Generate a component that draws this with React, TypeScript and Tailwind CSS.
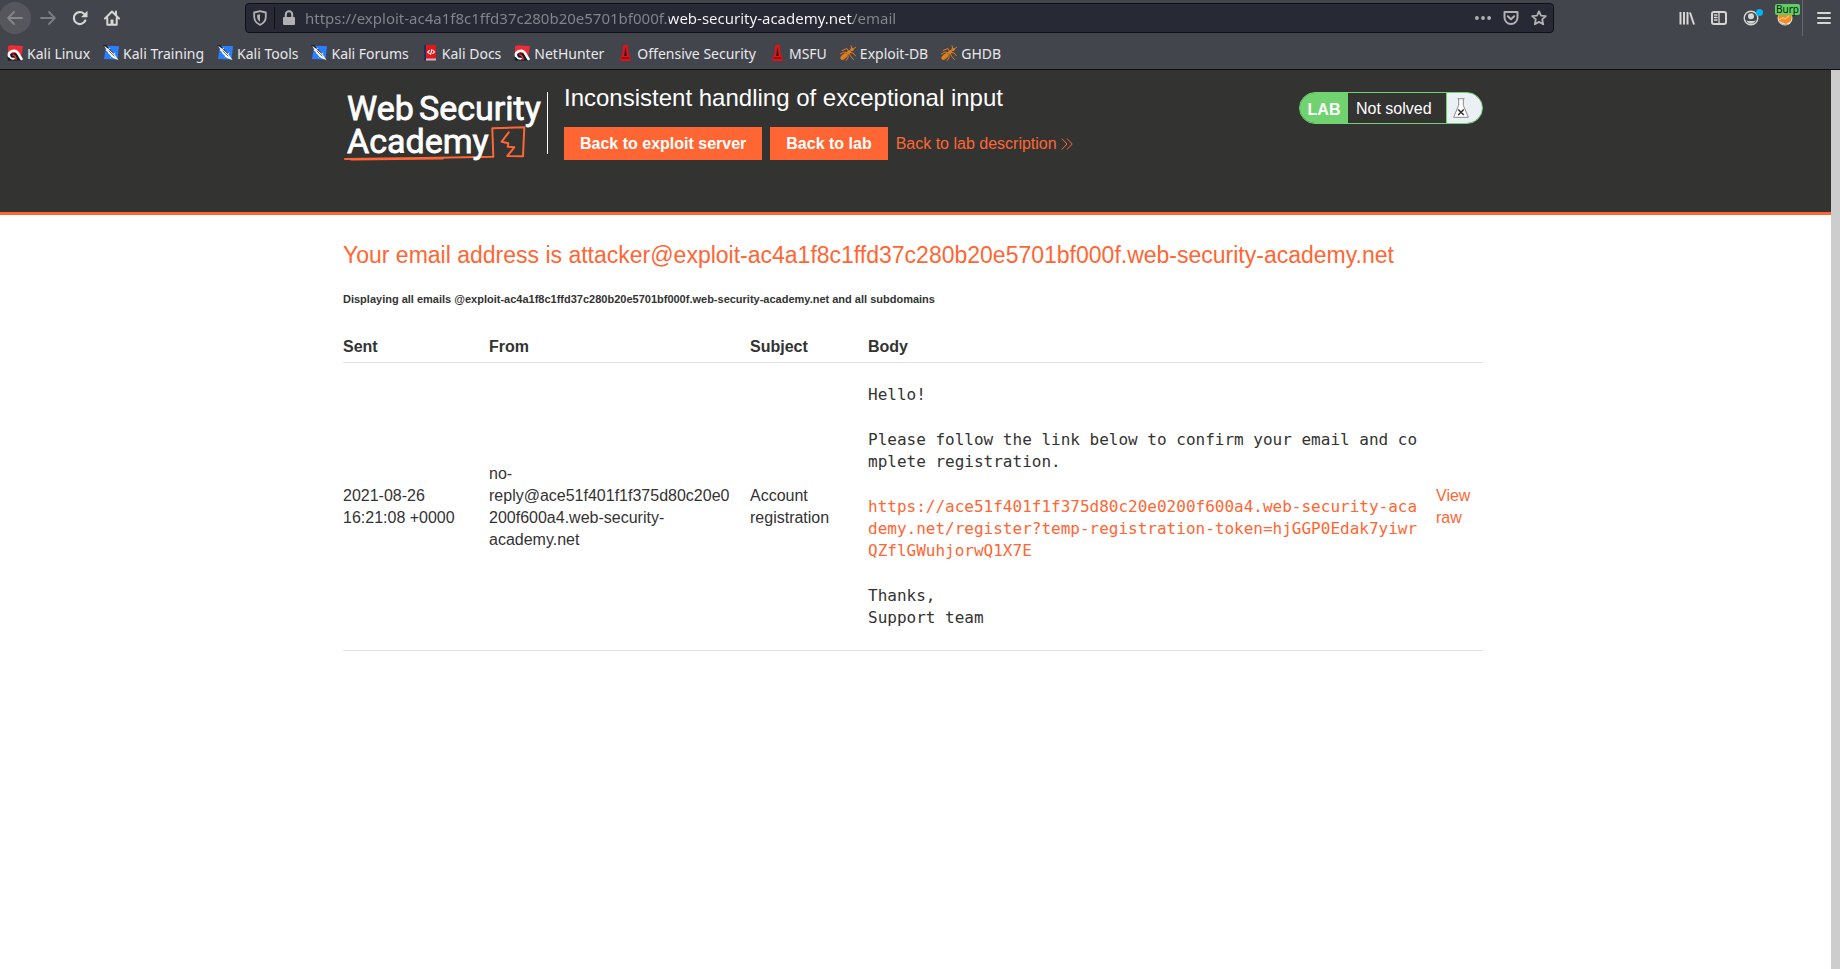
import React from "react";

type IconProps = { children: React.ReactNode; className?: string };

function Icon({ children, className = "" }: IconProps) {
  return (
    <svg
      viewBox="0 0 16 16"
      className={`h-4 w-4 shrink-0 ${className}`}
      fill="none"
      stroke="currentColor"
      strokeWidth="2"
      strokeLinecap="round"
      strokeLinejoin="round"
      aria-hidden="true"
    >
      {children}
    </svg>
  );
}

function DragonIcon() {
  return (
    <Icon>
      <path d="M1 1l3 -.7L16 1l-2 12H5L1 11z" fill="#ef2b36" stroke="none" />
      <path d="M0 9l1 6.500h13l1-2L9 8z" fill="#15181f" stroke="none" />
      <path d="M2 11C1 8 4 5.800 7 5.800c3.500 0 4.300 2.400 5.200 4.400.7 1.500 1.500 2.600 2.300 3.800" stroke="#fff" strokeWidth="2.600" />
      <path d="M6 10c2 .2 2.800 1.800 3 4.200" stroke="#ef2b36" strokeWidth="1.600" />
      <path d="M2.500 11.500c.8 1.800 2.500 2.500 4.500 2.200" stroke="#fff" strokeWidth="1.800" />
    </Icon>
  );
}

function KnifeIcon() {
  return (
    <Icon>
      <path d="M3 1h13l-1.500 13.500L1 14z" fill="#2a7fff" stroke="none" />
      <path d="M0 0h3l8 8.500L10 12z" fill="#15181f" stroke="none" />
      <path d="M1 .5l5 4 6 5.500 3.500 5L10 13 5.500 8.500z" fill="#fff" stroke="none" />
      <path d="M3.500 5.500l3-2M8 12l4-4" stroke="#fff" strokeWidth="1" />
      <path d="M6 6l5 5" stroke="#444" strokeWidth="0.800" />
    </Icon>
  );
}

function DocsIcon() {
  return (
    <Icon>
      <path d="M2 0h12v15.500H2z" fill="#e3161b" stroke="none" />
      <path d="M2 0h2v15.500H2z" fill="#1c2f63" stroke="none" />
      <path d="M4 13.500h10v2H4z" fill="#b9c0cc" stroke="none" />
      <path d="M7.500 5.500L5.500 7.200l1.800 1.500M9.800 4.500l-1.200 5M11 5.300l1.700 1.500-1.900 1.700" stroke="#fff" strokeWidth="1.100" />
    </Icon>
  );
}

function SpearIcon() {
  return (
    <Icon>
      <path d="M6 0h5l.5 8L14 14l-1 2H4l-1-2 2.500-6z" fill="#d8141c" stroke="none" />
      <path d="M8.500 2L9.600 11H7.400z" fill="#1b1011" stroke="none" />
      <path d="M5 13h7" stroke="#8c0d13" strokeWidth="1.500" />
    </Icon>
  );
}

function AntIcon() {
  return (
    <Icon className="text-[#dd7d1c]">
      <ellipse cx="4" cy="11.500" rx="4.200" ry="2.400" transform="rotate(-40 4 11.5)" fill="currentColor" stroke="none" />
      <ellipse cx="9" cy="7" rx="2.400" ry="1.600" transform="rotate(-35 9 7)" fill="currentColor" stroke="none" />
      <circle cx="12" cy="4.500" r="1.700" fill="currentColor" stroke="none" />
      <path d="M12 4L11 .7M12.500 4.500l3.300-2.300M9 7L7 3.500 2 5.500M8 8l-4-1-3.500 2M9.500 7.500l3.500.5 2.700 3M9 8l1.500 3 3 3.500M8 9v4l-2 2.500" strokeWidth="1" />
    </Icon>
  );
}

const bookmarks = [
  { label: "Kali Linux", icon: <DragonIcon /> },
  { label: "Kali Training", icon: <KnifeIcon /> },
  { label: "Kali Tools", icon: <KnifeIcon /> },
  { label: "Kali Forums", icon: <KnifeIcon /> },
  { label: "Kali Docs", icon: <DocsIcon /> },
  { label: "NetHunter", icon: <DragonIcon /> },
  { label: "Offensive Security", icon: <SpearIcon /> },
  { label: "MSFU", icon: <SpearIcon /> },
  { label: "Exploit-DB", icon: <AntIcon /> },
  { label: "GHDB", icon: <AntIcon /> },
];

function BrowserChrome() {
  return (
    <div className="border-b border-[#0c0c0d] bg-[#42454c] font-['Noto_Sans',sans-serif] text-[#e8e8ea]">
      <div className="flex h-9 items-center">
        <div className="flex w-[245px] shrink-0 items-center text-[#d6d6d3]">
          <button aria-label="Back" className="-ml-px flex h-8 w-8 items-center justify-center rounded-full bg-[#56575d] text-[#85868a]">
            <Icon><path d="M15 8H1.500M7 2L1.200 8 7 14" strokeWidth="1.800" /></Icon>
          </button>
          <button aria-label="Forward" className="ml-px flex h-8 w-8 items-center justify-center text-[#7c7e83]">
            <Icon><path d="M1 8h13.500M9 2l5.800 6L9 14" strokeWidth="1.800" /></Icon>
          </button>
          <button aria-label="Reload" className="flex h-8 w-8 items-center justify-center">
            <Icon>
              <path d="M13.300 10.500A6 6 0 1 1 12 3.700" strokeWidth="2.200" />
              <path d="M15.500 .8v6.500H9z" fill="currentColor" stroke="none" />
            </Icon>
          </button>
          <button aria-label="Home" className="flex h-8 w-8 items-center justify-center">
            <Icon>
              <path d="M1 8.500L8 1.500l7 7M3.300 8v6.800h9.400V8" />
              <path d="M6.500 9.500h3V15h-3z" fill="currentColor" stroke="none" />
              <path d="M12 1.500v3" />
            </Icon>
          </button>
        </div>
        <div className="flex h-[30px] grow items-center rounded-[4px] border border-[#0f1016] bg-[#272935] text-[#b1b1b3]">
          <button aria-label="Tracking protection" className="flex h-full w-7 items-center justify-center">
            <Icon>
              <path d="M8 1.200l5.800 1.300v4.300c0 4-2.300 6.600-5.800 8-3.500-1.400-5.800-4-5.800-8V2.500z" strokeWidth="1.800" />
              <path d="M8 4.200v7.500c-1.800-1.200-2.900-2.700-2.900-5V4.800z" fill="currentColor" stroke="none" />
            </Icon>
          </button>
          <span className="h-[22px] w-px bg-[#0f1016]" />
          <button aria-label="Site information" className="flex h-full w-[30px] items-center justify-center pr-[2px]">
            <Icon>
              <path d="M4.800 7V4.500a3.200 3.200 0 0 1 6.400 0V7" />
              <path d="M3 7h10a1 1 0 0 1 1 1v6a1 1 0 0 1-1 1H3a1 1 0 0 1-1-1V8a1 1 0 0 1 1-1z" fill="currentColor" stroke="none" />
            </Icon>
          </button>
          <input
            aria-label="Address"
            readOnly
            value="https://exploit-ac4a1f8c1ffd37c280b20e5701bf000f.web-security-academy.net/email"
            className="h-full min-w-0 grow bg-[linear-gradient(90deg,#85868d_364px,#fbfbfe_364px,#fbfbfe_548px,#85868d_548px)] bg-clip-text text-[15px] text-transparent outline-none"
          />
          <div className="flex items-center gap-3 pr-[6px]">
            <button aria-label="Page actions">
              <Icon><path d="M1.900 8h.01M8 8h.01M14.100 8h.01" strokeWidth="3.800" /></Icon>
            </button>
            <button aria-label="Save to Pocket">
              <Icon><path d="M1.500 2h13v5.500a6.500 6.500 0 0 1-13 0zM4.800 6.200L8 9.300l3.200-3.100" /></Icon>
            </button>
            <button aria-label="Bookmark this page">
              <Icon><path d="M8 1.300l2 4.400 4.800.5-3.600 3.200 1 4.900L8 11.900l-4.200 2.400 1-4.900L1.200 6.200 6 5.700z" strokeWidth="1.800" /></Icon>
            </button>
          </div>
        </div>
        <div className="flex w-[286px] shrink-0 items-center justify-end text-[#d6d6d3]">
          <button aria-label="Library" className="flex h-8 w-8 items-center justify-center">
            <Icon><path d="M1.500 2v12.500M5 2v12.500M8.500 2v12.500M11 2.500l4 12" strokeLinecap="butt" /></Icon>
          </button>
          <button aria-label="Sidebars" className="flex h-8 w-8 items-center justify-center">
            <Icon>
              <rect x="1" y="2" width="14" height="12" rx="2" />
              <path d="M8 2v12M3.500 5h2.500M3.500 7.500h2.500M3.500 10H6" strokeWidth="1.300" />
            </Icon>
          </button>
          <button aria-label="Account" className="relative flex h-8 w-8 items-center justify-center">
            <Icon>
              <circle cx="8" cy="8" r="6.800" strokeWidth="1.400" />
              <circle cx="8" cy="6.300" r="3" fill="currentColor" stroke="none" />
              <path d="M3.500 10.500c2.200.8 6.800.8 9 0-.8 2-2.500 3.200-4.500 3.200s-3.700-1.200-4.500-3.200z" fill="currentColor" stroke="none" />
            </Icon>
            <span className="absolute top-[7px] right-[4px] h-[7px] w-[7px] rounded-full bg-[#00b3f4]" />
          </button>
          <button aria-label="Burp proxy" className="relative flex h-9 w-9 items-center justify-center border-r border-[#67696f]">
            <Icon>
              <circle cx="8" cy="8" r="7.500" fill="#e9e2d6" stroke="none" />
              <path d="M1 4h14l-1 7-5 3-7-3z" fill="#f08c24" stroke="none" />
              <path d="M3 9.500l3-2 2 1.500 4-3" stroke="#ffc470" strokeWidth="1.200" />
              <path d="M2 12l4 2.500h5" stroke="#b9b4ab" strokeWidth="1" />
            </Icon>
            <span className="absolute top-[4px] right-[2px] rounded-[2px] bg-[#5fcf63] px-px text-[10px] leading-[11px] text-[#0c1a0c]">Burp</span>
          </button>
          <button aria-label="Open menu" className="ml-[5px] flex h-8 w-8 items-center justify-center">
            <Icon><path d="M2 3h12M2 8h12M2 13h12" /></Icon>
          </button>
        </div>
      </div>
      <nav aria-label="Bookmarks" className="flex h-[33px] items-center gap-[13px] pt-px pl-[7px] text-[14px]">
        {bookmarks.map((b) => (
          <a key={b.label} href="#" className="flex items-center gap-1 whitespace-nowrap">
            {b.icon}
            {b.label}
          </a>
        ))}
      </nav>
    </div>
  );
}

function AcademyLogo() {
  return (
    <svg
      viewBox="0 -10 200 86"
      className="h-[86px] w-[200px] shrink-0 font-[Roboto,sans-serif]"
      role="img"
      aria-label="Web Security Academy"
    >
      <g fill="none" stroke="#ff6633" strokeWidth="2" strokeLinejoin="round" strokeLinecap="round">
        <path d="M165.700 42.300L158.700 51.700L165.300 53.300L164.700 56.700L171.300 57.300L164.300 66L180 66.300L181.300 37.300L149.300 38.300L150.300 66.700L80 68L2 69" />
        <path d="M8 69.600L100 68.600" />
      </g>
      <g fill="#fff" stroke="#fff" strokeWidth="0.800" fontSize="34">
        <text x="4" y="30">Web</text>
        <text x="76" y="30">Security</text>
        <text x="4" y="63">Academy</text>
      </g>
    </svg>
  );
}

function LabStatus() {
  return (
    <div className="flex h-8 shrink-0 items-stretch overflow-hidden rounded-full border border-[#70d36f] text-white">
      <span className="flex w-12 items-center justify-center bg-[#70d36f] pt-[3px] font-bold">LAB</span>
      <span className="flex w-[98px] items-center pt-[2px] pl-2">Not solved</span>
      <span className="flex w-9 items-center border-l border-[#70d36f] bg-[#eaf0f3] pl-[6px]">
        <svg viewBox="0 0 16 20" className="h-5 w-4" fill="none" stroke="#8a8a8a" aria-hidden="true">
          <path d="M4.500 .7h7M5.700 1v6.300L.6 19.300h14.800L10.300 7.300V1" fill="#fff" />
          <path d="M5.200 11.500l5.600 5.500M10.800 11.500L5.200 17" stroke="#333" strokeWidth="1.500" />
        </svg>
      </span>
    </div>
  );
}

function LabHeader() {
  return (
    <header className="border-b-[3px] border-[#ff6633] bg-[#333332] pr-[5px]">
      <div className="mx-auto flex h-[142px] max-w-[1140px] items-start text-white">
        <a href="#" className="mt-[10px]"><AcademyLogo /></a>
        <div className="mt-[22px] ml-1 h-[62px] border-l border-white" />
        <div className="ml-4 grow pt-[14px]">
          <h2 className="text-[24px] leading-7">Inconsistent handling of exceptional input</h2>
          <div className="mt-[15px] flex items-center gap-2">
            <a href="#" className="bg-[#ff6633] px-4 py-[5px] leading-[23px] font-bold">Back to exploit server</a>
            <a href="#" className="bg-[#ff6633] px-4 py-[5px] leading-[23px] font-bold">Back to lab</a>
            <a href="#" className="flex items-center gap-1 text-[#ff6633]">
              Back to lab description
              <svg viewBox="0 0 12 12" className="h-3 w-3" fill="none" stroke="currentColor" aria-hidden="true">
                <path d="M.8 .5L6 6 .8 11.500M6 .5L11.200 6 6 11.500" />
              </svg>
            </a>
          </div>
        </div>
        <div className="mt-[22px]"><LabStatus /></div>
      </div>
    </header>
  );
}

function EmailTable() {
  return (
    <table className="mt-6 w-full table-fixed border-collapse text-left leading-[22px]">
      <colgroup>
        <col className="w-[146px]" />
        <col className="w-[261px]" />
        <col className="w-[118px]" />
        <col />
        <col className="w-[47px]" />
      </colgroup>
      <thead>
        <tr className="border-b border-[#e2e2e2]">
          <th className="h-[31px] pt-[2px]">Sent</th>
          <th className="pt-[2px]">From</th>
          <th className="pt-[2px]">Subject</th>
          <th className="pt-[2px]">Body</th>
          <th aria-label="Actions" />
        </tr>
      </thead>
      <tbody>
        <tr className="border-b border-[#e2e2e2]">
          <td className="pt-[2px] pr-5">2021-08-26 16:21:08 +0000</td>
          <td className="pt-[2px] pr-4 break-words">no-reply@ace51f401f1f375d80c20e0200f600a4.web-security-academy.net</td>
          <td className="pt-[2px] pr-5">Account registration</td>
          <td className="space-y-[23px] py-[21px] pr-4 font-['DejaVu_Sans_Mono',monospace] break-all">
            <p>Hello!</p>
            <p>Please follow the link below to confirm your email and complete registration.</p>
            <p>
              <a href="#" className="text-[#ff6633]">
                https://ace51f401f1f375d80c20e0200f600a4.web-security-academy.net/register?temp-registration-token=hjGGP0Edak7yiwrQZflGWuhjorwQ1X7E
              </a>
            </p>
            <p>Thanks,<br />Support team</p>
          </td>
          <td className="pt-[2px]"><a href="#" className="text-[#ff6633]">View raw</a></td>
        </tr>
      </tbody>
    </table>
  );
}

export default function App() {
  return (
    <div className="flex min-h-screen flex-col bg-white">
      <BrowserChrome />
      <div className="flex grow font-['Liberation_Sans',sans-serif] text-base text-[#333332]">
        <div className="min-w-0 grow">
          <LabHeader />
          <main className="pr-[5px]">
            <div className="mx-auto max-w-[1140px] pt-[26px]">
              <h1 className="text-[23px] leading-7 text-[#ff6633]">
                Your email address is attacker@exploit-ac4a1f8c1ffd37c280b20e5701bf000f.web-security-academy.net
              </h1>
              <p className="mt-[22px] text-[11px] leading-4 font-bold">
                Displaying all emails @exploit-ac4a1f8c1ffd37c280b20e5701bf000f.web-security-academy.net and all subdomains
              </p>
              <EmailTable />
            </div>
          </main>
        </div>
        <div className="w-[9px] shrink-0 bg-[#cdcdcd]" />
      </div>
    </div>
  );
}
